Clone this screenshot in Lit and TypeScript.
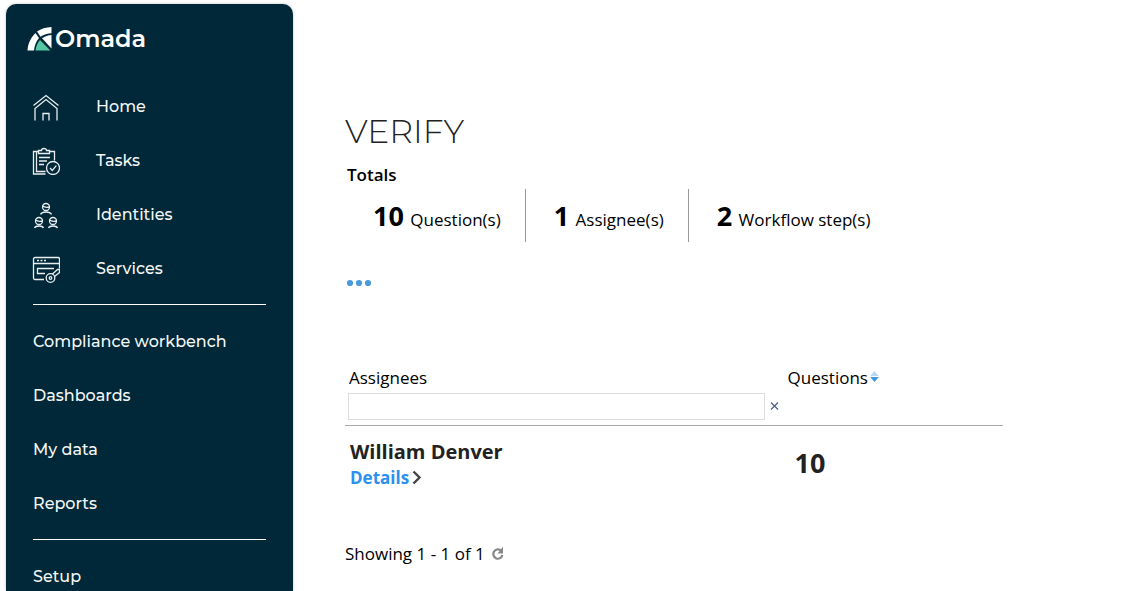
import { LitElement, html, css, svg, TemplateResult } from "lit";
import { customElement, state } from "lit/decorators.js";

interface NavEntry {
  label: string;
  icon: TemplateResult;
}

const homeIcon = svg`
  <path d="M1.5 12.500 14 2.500l12.5 10" />
  <path d="M3 27.500v-12L14 6.500l11 9v12" />
  <path d="M11 27.500v-7h6v7" />`;

const tasksIcon = svg`
  <path d="M6.500 4.500H1.500v22.500h12M4.500 4.500v20h9" />
  <path d="M17.500 4.500h5v9M6.500 6.500h11v-3h-3a2.500 2 0 0 0-5 0h-3z" />
  <path d="M7 10.500h11M7 14h8M7 17.500h5" />
  <circle cx="21" cy="21" r="6.500" />
  <path d="m18 21 2.300 2.500 4-4.800" />`;

const identitiesIcon = svg`
  <circle cx="14" cy="6" r="3.500" />
  <path d="M10.500 5c2 1.500 4.500 1.500 7 1M8.500 13.500c1-2 3-2.500 5.500-2.500s4.500.5 5.500 2.500" />
  <circle cx="7" cy="20" r="3.500" />
  <path d="M3.500 19c2 1.500 4.500 1.500 7 1M2.500 27c.5-1.500 2.500-2 4.500-2s4 .5 4.500 2" />
  <circle cx="21" cy="20" r="3.500" />
  <path d="M17.500 19c2 1.500 4.500 1.500 7 1M16.500 27c.5-1.500 2.500-2 4.500-2s4 .5 4.500 2" />`;

const servicesIcon = svg`
  <path d="M12 24.500H3A1.500 1.500 0 0 1 1.500 23V4A1.500 1.500 0 0 1 3 2.500h23A1.500 1.500 0 0 1 27.500 4v9.500M1.500 8.500h26" />
  <path d="M5 5.500h2M8.500 5.500h2M12 5.500h2" />
  <path d="M22 13.500H5.500v5H13" />
  <circle cx="18.500" cy="23" r="4.300" />
  <circle cx="18.500" cy="23" r="1.300" />
  <path d="m20.500 19 5-4.500h2v3l-5 4" />`;

@customElement("side-nav")
export class SideNav extends LitElement {
  static styles = css`
    :host {
      display: block;
      box-sizing: border-box;
      padding: 20px 27px 0;
      overflow: hidden;
      border-radius: 10px 10px 0 0;
      background: #002838;
      color: #f4f6f7;
      box-shadow: 0 0 3px rgba(0, 0, 0, 0.25);
      font: 500 16px/54px "Montserrat", "Inter", sans-serif;
    }
    .brand {
      display: flex;
      align-items: center;
      gap: 3px;
      height: 30px;
      margin: 0 0 26px -6px;
      color: #fff;
      font: 600 24px/30px "Montserrat", "Lato", sans-serif;
      text-decoration: none;
    }
    ul {
      margin: 0;
      padding: 0;
      list-style: none;
    }
    .link {
      display: flex;
      align-items: center;
      height: 54px;
      color: inherit;
      text-decoration: none;
    }
    .icon {
      width: 28px;
      height: 28px;
      margin: 0 36px 0 -1px;
      fill: none;
      stroke: #e9eef0;
      stroke-width: 1.3;
    }
    .rule {
      height: 1px;
      margin: 8px 0 10px;
      border: 0;
      background: #fff;
    }
  `;

  private primary: NavEntry[] = [
    { label: "Home", icon: homeIcon },
    { label: "Tasks", icon: tasksIcon },
    { label: "Identities", icon: identitiesIcon },
    { label: "Services", icon: servicesIcon },
  ];

  private secondary = ["Compliance workbench", "Dashboards", "My data", "Reports"];

  render() {
    return html`
      <a class="brand" href="#">
        <svg width="25" height="25" viewBox="0 0 25 25" aria-hidden="true">
          <path fill="#fff" d="M.5 23.500C1 16 4 10.500 8.500 6L12 11C9 14.500 7.500 18.500 7 23.500z" />
          <path fill="#fff" d="M10 4.500C14 1.800 19 .2 24.500 0v6.300c-4 .2-7.500 1.200-11 3.500z" />
          <path fill="#fff" d="M24.500 8v13.500L15 11.300c3-2 6-3.100 9.500-3.300z" />
          <path fill="#56c7a3" d="M8.500 23.500C9 19.500 10.300 16 13 13l10.300 10.500z" />
        </svg>
        <span>Omada</span>
      </a>
      <nav aria-label="Main">
        <ul>
          ${this.primary.map(
            (e) => html`<li>
              <a class="link" href="#"
                ><svg class="icon" viewBox="0 0 28 28" aria-hidden="true">${e.icon}</svg>${e.label}</a
              >
            </li>`
          )}
        </ul>
        <hr class="rule" />
        <ul>
          ${this.secondary.map((l) => html`<li><a class="link" href="#">${l}</a></li>`)}
        </ul>
        <hr class="rule" />
        <ul>
          <li><a class="link" href="#">Setup</a></li>
        </ul>
      </nav>
    `;
  }
}

@customElement("verify-view")
export class VerifyView extends LitElement {
  static styles = css`
    :host {
      display: block;
      padding: 105px 0 0;
      color: #000;
      font: 400 17px/24px "Open Sans", sans-serif;
    }
    h1 {
      margin: 0;
      color: #222;
      font: 300 33px/44px "Montserrat", "Open Sans", sans-serif;
    }
    h2 {
      margin: 10px 2px 2px;
      font: 600 17px/24px "Open Sans", sans-serif;
    }
    .totals {
      display: flex;
      margin: 0;
      padding: 0;
      list-style: none;
    }
    .total {
      box-sizing: border-box;
      height: 53px;
      padding: 9px 24px 0 28px;
    }
    .total + .total {
      border-left: 1px solid #999;
    }
    .total b {
      margin-right: 2px;
      font-size: 27px;
      line-height: 36px;
    }
    button {
      display: inline-flex;
      align-items: center;
      justify-content: center;
      padding: 0;
      border: 0;
      background: none;
      color: inherit;
      font: inherit;
      cursor: pointer;
    }
    .more {
      display: flex;
      width: 28px;
      height: 18px;
      margin: 32px 0 74px;
    }
    table {
      width: 100%;
      max-width: 658px;
      border-collapse: collapse;
      table-layout: fixed;
    }
    th {
      padding: 0;
      border-bottom: 1px solid #aaa;
      font-weight: 500;
      text-align: left;
      vertical-align: top;
    }
    .wide {
      width: 66.5%;
    }
    th label {
      display: block;
      margin-left: 4px;
    }
    .filter {
      display: flex;
      align-items: center;
      gap: 5px;
      margin: 3px 4px 5px 3px;
    }
    input {
      flex: 1;
      min-width: 0;
      box-sizing: border-box;
      height: 27px;
      padding: 0 6px;
      border: 1px solid #ddd;
      border-radius: 0;
      font: inherit;
    }
    td {
      padding: 12px 0 0 5px;
      color: #222;
      vertical-align: top;
    }
    .sort {
      gap: 2px;
      margin-left: 5px;
    }
    .name {
      font-size: 20px;
      line-height: 28px;
      font-weight: 700;
    }
    .details {
      display: inline-flex;
      align-items: center;
      gap: 3px;
      color: #2b90f0;
      font-weight: 700;
      line-height: 20px;
      text-decoration: none;
    }
    .count {
      padding: 19px 0 0 12px;
      font-size: 27px;
      line-height: 36px;
      font-weight: 700;
    }
    .footer {
      display: flex;
      align-items: center;
      gap: 7px;
      margin: 52px 0 0;
    }
  `;

  @state() private filter = "";

  render() {
    return html`
      <h1>VERIFY</h1>
      <h2>Totals</h2>
      <ul class="totals">
        <li class="total"><b>10</b> Question(s)</li>
        <li class="total"><b>1</b> Assignee(s)</li>
        <li class="total"><b>2</b> Workflow step(s)</li>
      </ul>
      <button class="more" aria-label="More actions">
        <svg width="28" height="8" viewBox="0 0 28 8" fill="#4a9bdc" aria-hidden="true">
          <circle cx="5" cy="4" r="3.100" />
          <circle cx="14" cy="4" r="3.100" />
          <circle cx="23" cy="4" r="3.100" />
        </svg>
      </button>
      <table>
        <thead>
          <tr>
            <th class="wide">
              <label for="assignee">Assignees</label>
              <div class="filter">
                <input
                  id="assignee"
                  type="text"
                  .value=${this.filter}
                  @input=${(e: Event) => (this.filter = (e.target as HTMLInputElement).value)}
                />
                <button aria-label="Clear filter" @click=${() => (this.filter = "")}>
                  <svg width="9" height="9" viewBox="0 0 9 9" stroke="#4a5f80" stroke-width="1.200" aria-hidden="true">
                    <path d="m1 .5 7 7M8 .5l-7 7" />
                  </svg>
                </button>
              </div>
            </th>
            <th>
              <button class="sort">
                Questions
                <svg width="9" height="14" viewBox="0 0 9 14" aria-hidden="true">
                  <path fill="#b9d9f3" d="m4.500 0 4.300 5H.2z" />
                  <path fill="#3f97dd" d="m4.500 11 4.300-5H.2z" />
                </svg>
              </button>
            </th>
          </tr>
        </thead>
        <tbody>
          <tr>
            <td>
              <div class="name">William Denver</div>
              <a class="details" href="#"
                >Details
                <svg width="10" height="16" viewBox="0 0 10 16" fill="none" stroke="#444" stroke-width="2.400" aria-hidden="true">
                  <path d="m1.500 1.500 6 6-6 6" />
                </svg>
              </a>
            </td>
            <td class="count">10</td>
          </tr>
        </tbody>
      </table>
      <div class="footer">
        Showing 1 - 1 of 1
        <button aria-label="Refresh">
          <svg width="12" height="16" viewBox="0 0 12 16" fill="none" aria-hidden="true">
            <path stroke="#888" stroke-width="2.200" d="M8.500 4.200A4.500 4.700 0 1 0 10.300 9" />
            <path fill="#888" d="M11 .8v6.700H5.500z" />
          </svg>
        </button>
      </div>
    `;
  }
}

@customElement("app-root")
export class AppRoot extends LitElement {
  static styles = css`
    :host {
      display: grid;
      grid-template-columns: 287px minmax(0, 1fr);
      gap: 52px;
      box-sizing: border-box;
      height: 100vh;
      padding: 4px 24px 0 6px;
      overflow: hidden;
      background: #fff;
    }
  `;

  render() {
    return html`<side-nav></side-nav><verify-view></verify-view>`;
  }
}
